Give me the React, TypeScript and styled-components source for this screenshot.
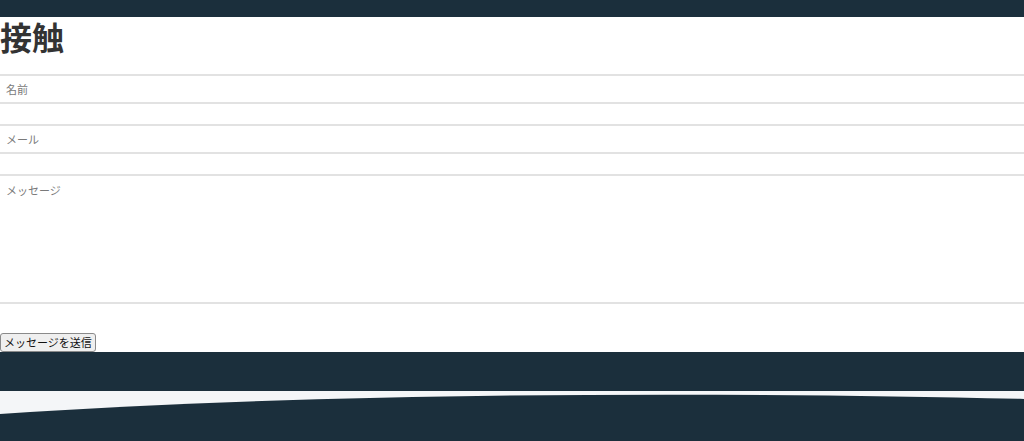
import React from "react";
import styled, { createGlobalStyle } from "styled-components";

const DARK = "#1b2f3c";
const LIGHT = "#f4f6f8";

const GlobalStyle = createGlobalStyle`
  html, body {
    margin: 0;
    padding: 0;
    background: #ffffff;
    font-family: "Noto Sans CJK JP", "Noto Sans", sans-serif;
    color: #333333;
  }
  * { box-sizing: border-box; }
`;

const Page = styled.div`
  display: flex;
  flex-direction: column;
  min-height: 441px;
`;

const TopBar = styled.header`
  height: 17px;
  background: ${DARK};
`;

const Main = styled.main`
  display: flex;
  flex-direction: column;
  align-items: flex-start;
`;

const Title = styled.h1`
  margin: 0 0 18px;
  font-size: 32px;
  line-height: 39px;
  font-weight: 700;
  color: #333333;
`;

const Form = styled.form`
  display: flex;
  flex-direction: column;
  align-items: flex-start;
  width: 100%;
`;

const fieldBase = `
  display: block;
  width: 100%;
  border: none;
  border-top: 2px solid #e2e2e2;
  border-bottom: 2px solid #e2e2e2;
  font-family: "Noto Sans CJK JP", "Noto Sans", sans-serif;
  font-size: 11px;
  color: #333;
  padding: 0 6px;
  background: #fff;
  outline: none;
  &::placeholder { color: #7a7a7a; }
`;

const TextField = styled.input`
  ${fieldBase}
  height: 30px;
  margin: 0 0 20px;
`;

const MessageField = styled.textarea`
  ${fieldBase}
  height: 130px;
  margin: 0;
  padding-top: 6px;
  resize: none;
`;

const SubmitButton = styled.button`
  margin-top: 29px;
  height: 19px;
  padding: 0 3px;
  font-family: "Noto Sans CJK JP", "Noto Sans", sans-serif;
  font-size: 11px;
  line-height: 15px;
  color: #111;
  background: #efefef;
  border: 1px solid #8a8a8a;
  border-radius: 3px;
`;

const Footer = styled.footer`
  display: flex;
  flex-direction: column;
`;

const FooterBand = styled.div`
  height: 39px;
  background: ${DARK};
`;

const Wave = styled.svg`
  display: block;
  width: 100%;
  height: 51px;
  background: ${LIGHT};
`;

export default function App() {
  return (
    <>
      <GlobalStyle />
      <Page>
        <TopBar />
        <Main>
          <Title>接触</Title>
          <Form onSubmit={(e) => e.preventDefault()}>
            <TextField type="text" placeholder="名前" />
            <TextField type="email" placeholder="メール" />
            <MessageField placeholder="メッセージ" />
            <SubmitButton type="submit">メッセージを送信</SubmitButton>
          </Form>
        </Main>
        <Footer>
          <FooterBand />
          <Wave viewBox="0 0 1024 51" preserveAspectRatio="none">
            <path d="M0,23 C300,2 700,0 1024,8 L1024,51 L0,51 Z" fill={DARK} />
          </Wave>
        </Footer>
      </Page>
    </>
  );
}
